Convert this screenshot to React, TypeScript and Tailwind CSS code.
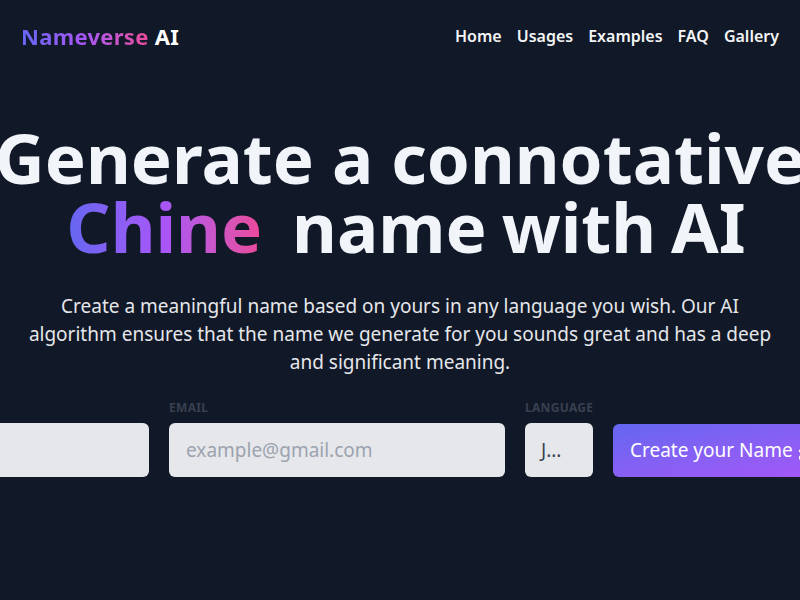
import React from "react";
import { Sparkles } from "lucide-react";

const links = ["Home", "Usages", "Examples", "FAQ", "Gallery"];

function Field({ label, className, children }: { label: string; className: string; children: React.ReactNode }) {
  return (
    <div className={`flex shrink-0 flex-col ${className}`}>
      <span className="mb-[7px] text-[12px] font-bold uppercase leading-[16px] tracking-wide text-[#374151]">{label}</span>
      {children}
    </div>
  );
}

export default function App() {
  return (
    <div className="min-h-screen w-full overflow-hidden bg-[#111827] font-['Noto_Sans',sans-serif] text-[#f3f4f6]">
      <header className="flex items-center justify-between px-[21px] pt-[21px]">
        <div className="text-[22px] font-bold leading-[30px] tracking-[0.3px]">
          <span className="bg-gradient-to-r from-[#6366f1] via-[#a855f7] to-[#ec4899] bg-clip-text text-transparent">Nameverse</span>
          <span className="text-white"> AI</span>
        </div>
        <nav className="flex gap-[15px] text-[16px] font-semibold leading-[30px] text-[#f3f4f6]">
          {links.map((l) => (
            <a key={l} href="#">{l}</a>
          ))}
        </nav>
      </header>

      <main className="flex flex-col items-center pt-[72px]">
        <h1 className="flex flex-col items-center text-[69px] font-bold leading-[69px] text-[#f1f5f9]">
          <span className="whitespace-nowrap">Generate a connotative</span>
          <span className="whitespace-pre pl-[12px] [word-spacing:-3px]">
            <span className="bg-gradient-to-r from-[#6366f1] via-[#a855f7] to-[#ec4899] bg-clip-text text-transparent">Chine</span>
            {"  name with AI"}
          </span>
        </h1>

        <p className="mt-[31px] max-w-[770px] px-2 text-center text-[19px] leading-[28px] text-[#e5e7eb]">
          Create a meaningful name based on yours in any language you wish. Our AI algorithm ensures that the name we generate for you sounds great and has a deep and significant meaning.
        </p>

        <div className="mt-[24px] flex items-end justify-center gap-[20px]">
          <Field label="Name" className="w-[200px]">
            <input className="h-[54px] w-full rounded-md bg-[#e5e7eb] px-4 text-[19px] outline-none" />
          </Field>
          <Field label="Email" className="w-[336px]">
            <input
              placeholder="example@gmail.com"
              className="h-[54px] w-full rounded-md bg-[#e5e7eb] px-[17px] text-[19px] text-[#374151] outline-none placeholder:text-[#9ca3af]"
            />
          </Field>
          <Field label="Language" className="w-[68px]">
            <div className="flex h-[54px] w-full items-center rounded-md bg-[#e5e7eb] px-[16px] text-[19px] text-[#374151]">
              J...
            </div>
          </Field>
          <button className="flex h-[53px] w-[238px] shrink-0 items-center gap-[5px] whitespace-nowrap rounded-md bg-gradient-to-br from-[#6366f1] to-[#a855f7] px-[17px] text-[19px] text-white">
            Create your Name
            <Sparkles className="h-5 w-5" />
          </button>
        </div>
      </main>
    </div>
  );
}
